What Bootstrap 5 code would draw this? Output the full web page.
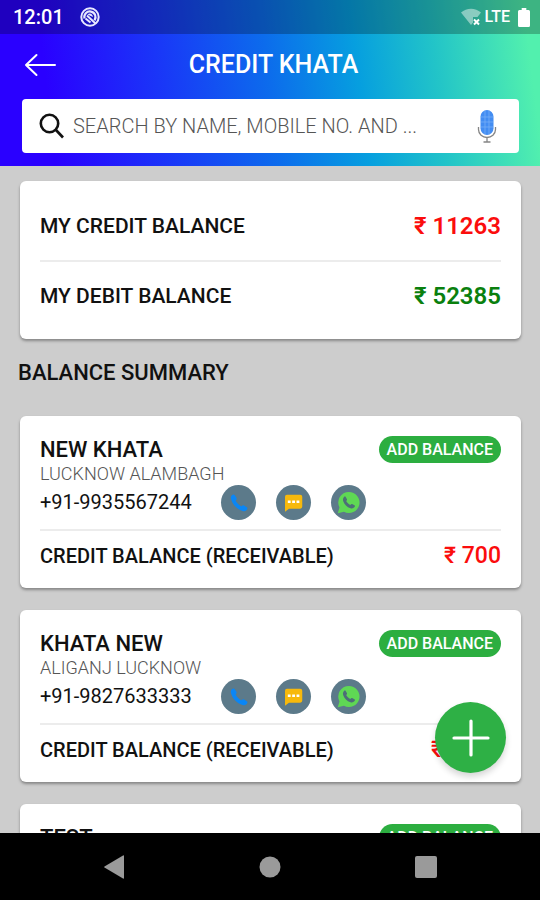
<!DOCTYPE html>
<html lang="en">
<head>
<meta charset="utf-8">
<meta name="viewport" content="width=device-width, initial-scale=1">
<title>Credit Khata</title>
<link rel="stylesheet" href="https://cdn.jsdelivr.net/npm/bootstrap@5.3.0/dist/css/bootstrap.min.css">
<style>
body { font-family: Roboto, "Noto Sans", sans-serif; background: #cdcdcd; color: #111; }
svg { display: block; flex: none; }
.app-head { background: linear-gradient(83deg, #2a00ff 10%, #1a35f8 30%, #0c6cec 50%, #069fdf 66%, #22c4c8 80%, #52f0ae 97%); }
.status-bar { height: 34px; padding: 0 10px 0 13px; background: rgba(0, 0, 0, .25); }
.clock { font-size: 20px; font-weight: 500; line-height: 36px; }
.net { font-size: 16px; font-weight: 500; line-height: 36px; }
.title-bar { height: 61px; padding: 0 17px 0 24px; }
.title-bar h1 { font-size: 25px; line-height: 32px; font-weight: 500; }
.title-side { width: 32px; }
.search-box { height: 54px; margin: 4px 21px 13px 22px; padding: 0 20px 0 17px; border-radius: 4px; }
.search-box input { font-size: 20px; font-weight: 300; color: #555; outline: 0; text-overflow: ellipsis; }
.search-box input::placeholder { color: #555; opacity: 1; }
.content { padding: 15px 19px 0 20px; min-height: 0; }
.panel { border: 0; border-radius: 6px; padding: 0 20px; box-shadow: 0 2px 3px rgba(0, 0, 0, .35); flex: none; }
.totals { padding-top: 11px; padding-bottom: 9px; }
.line { font-size: 21px; line-height: 68px; font-weight: 500; }
.line-short { font-size: 20px; line-height: 50px; }
.amount { font-weight: 600; font-size: 24px; }
.amount-sm { font-weight: 500; font-size: 23px; }
.red { color: #fb0d0d; }
.green { color: #0a800e; }
.rule { height: 2px; background: #ececec; }
.heading { font-size: 22px; line-height: 32px; font-weight: 500; margin: 18px 0 27px -2px; }
.account { padding-top: 20px; padding-bottom: 7px; margin-bottom: 22px; }
.account h3 { font-size: 22px; line-height: 27px; font-weight: 500; }
.place { font-size: 18px; line-height: 22px; color: #555; font-weight: 300; }
.phone { font-size: 20px; line-height: 35px; min-width: 181px; }
.account .rule { margin-top: 9px; }
.btn-add { height: 27px; padding: 0 8px; border-radius: 14px; background: #2cae40; color: #fff; font-size: 16px; line-height: 27px; font-weight: 500; }
.round { width: 35px; height: 35px; background: #5c7a8a; }
.contacts { gap: 20px; }
.fab { position: absolute; right: 34px; bottom: 127px; width: 71px; height: 71px; background: #2eb045; box-shadow: 0 4px 6px rgba(0, 0, 0, .16); }
.sys-nav { height: 67px; background: #000; padding: 0 78px; }
.sys-nav button { width: 72px; height: 60px; }
</style>
<script src="https://cdn.jsdelivr.net/npm/bootstrap@5.3.0/dist/js/bootstrap.bundle.min.js"></script>
</head>
<body class="d-flex flex-column vh-100 overflow-hidden">
<svg width="0" height="0" class="position-absolute" aria-hidden="true">
  <symbol id="i-call" viewBox="0 0 24 24"><path fill="#0a86f5" d="M4.200 3.600c.9-1 2.300-1.200 3-.2l2 3c.6.9.2 1.900-.9 2.900 1.200 2.700 3.400 4.900 6.300 6.200 1-1.100 2-1.400 2.900-.9l3 1.900c1.100.7.9 2-.1 3-1.300 1.300-2.700 1.700-4.500 1.200C9.800 18.900 5 14 3.300 8c-.5-1.800-.3-3.200.9-4.400z"/></symbol>
  <symbol id="i-sms" viewBox="0 0 24 24"><path fill="#f7b90c" d="M4.500 3h15.200A2.300 2.300 0 0 1 22 5.300v11.400a2.300 2.300 0 0 1-2.300 2.300H6.800L2.300 22.500V5.300A2.300 2.300 0 0 1 4.500 3z"/><path fill="#fff" d="M5.500 9.700h3.200v3H5.500zM10.500 9.700h3.200v3h-3.200zM15.500 9.700h3.200v3h-3.200z"/></symbol>
  <symbol id="i-wa" viewBox="0 0 24 24"><path fill="#5fd854" d="M12.300 1a11 11 0 1 1-5 20.700L.8 23.200l1.800-6A11 11 0 0 1 12.300 1z"/><path fill="#4d6f78" d="M7.300 6.300c.5-.6 1.400-.7 1.800-.1l1.300 2.300c.3.600-.1 1.200-.8 2 1 1.900 2.400 3.200 4.300 4.100.7-.9 1.200-1.300 1.900-1l2.400 1.200c.7.400.6 1.300.1 2-1 1.300-2.600 1.700-4.200 1.200-3.700-1.100-6.500-3.800-7.600-7.300-.5-1.700-.3-3.200.8-4.400z"/></symbol>
</svg>

<header class="app-head text-white">
  <div class="status-bar d-flex align-items-center">
    <span class="clock me-3">12:01</span>
    <svg width="20" height="20" viewBox="0 0 20 20" fill="none" stroke="#e8e8ff"><circle cx="10" cy="10" r="8.700" stroke-width="2"/><path d="M4.500 11.500A5.600 5.600 0 1 1 14.500 13.300" stroke-width="2.200"/><path d="M7.500 7.500c2-2 5-1 5.500 2.500z" fill="#e8e8ff" stroke="none"/><path d="M7 8.500l8.500 8M5.500 11.500l5 4" stroke-width="2"/></svg>
    <svg class="ms-auto me-1" width="20" height="18" viewBox="0 0 20 18"><path fill="#fff" fill-opacity=".45" d="M10 17L0 4.500C5.500-.6 14.500-.6 20 4.500L16.500 9H12v5.500z"/><path stroke="#fff" stroke-width="2" d="M13 11.500l5 5m0-5l-5 5"/></svg>
    <span class="net me-2">LTE</span>
    <svg width="12" height="19" viewBox="0 0 13 19" preserveAspectRatio="none"><path fill="#fff" d="M4 0h5v2h2.500A1.500 1.500 0 0 1 13 3.500v14a1.500 1.500 0 0 1-1.500 1.500h-10A1.500 1.500 0 0 1 0 17.500v-14A1.500 1.500 0 0 1 1.500 2H4z"/></svg>
  </div>
  <div class="title-bar d-flex align-items-center">
    <button type="button" class="btn p-0 border-0 title-side" aria-label="Back">
      <svg width="32" height="24" viewBox="0 0 32 24" fill="none" stroke="#fff" stroke-width="2" stroke-linecap="round" stroke-linejoin="round"><path d="M31 12H2M12.500 2L2 12l10.500 10"/></svg>
    </button>
    <h1 class="m-0 flex-fill text-center">CREDIT KHATA</h1>
    <div class="title-side"></div>
  </div>
  <div class="search-box bg-white d-flex align-items-center">
    <svg width="26" height="26" viewBox="0 0 26 26" fill="none" stroke="#111" stroke-width="2.600"><circle cx="10.500" cy="10.500" r="8.700"/><path d="M16.500 16.500l7.500 8"/></svg>
    <input type="text" class="border-0 bg-transparent flex-fill p-0 ms-2" aria-label="Search" placeholder="SEARCH BY NAME, MOBILE NO. AND ...">
    <button type="button" class="btn p-0 border-0" aria-label="Voice search">
      <svg width="24" height="34" viewBox="0 0 24 34"><rect x="5.500" y="1" width="13" height="25" rx="6.500" fill="#438df2"/><path d="M10 2v23M14 2v23M6 8h12M6 13h12M6 18h12" stroke="#75adf7" stroke-width=".8"/><path d="M3.500 18v2.500c0 4.500 4 8 8.500 8s8.500-3.500 8.500-8V18M12 29v4M8.500 33h7" fill="none" stroke="#858585" stroke-width="1.300"/></svg>
    </button>
  </div>
</header>

<main class="content d-flex flex-column flex-fill overflow-hidden">
  <section class="card panel totals">
    <div class="line d-flex justify-content-between"><span>MY CREDIT BALANCE</span><span class="amount red">₹ 11263</span></div>
    <div class="rule"></div>
    <div class="line d-flex justify-content-between"><span>MY DEBIT BALANCE</span><span class="amount green">₹ 52385</span></div>
  </section>

  <h2 class="heading">BALANCE SUMMARY</h2>

  <article class="card panel account">
    <div class="d-flex justify-content-between"><h3 class="m-0">NEW KHATA</h3><button type="button" class="btn border-0 btn-add">ADD BALANCE</button></div>
    <div class="place">LUCKNOW ALAMBAGH</div>
    <div class="d-flex">
      <span class="phone">+91-9935567244</span>
      <div class="d-flex contacts">
        <button type="button" class="btn border-0 p-0 rounded-circle round d-flex align-items-center justify-content-center" aria-label="Call"><svg width="22" height="22"><use href="#i-call"/></svg></button>
        <button type="button" class="btn border-0 p-0 rounded-circle round d-flex align-items-center justify-content-center" aria-label="Message"><svg width="21" height="21"><use href="#i-sms"/></svg></button>
        <button type="button" class="btn border-0 p-0 rounded-circle round d-flex align-items-center justify-content-center" aria-label="WhatsApp"><svg width="23" height="23"><use href="#i-wa"/></svg></button>
      </div>
    </div>
    <div class="rule"></div>
    <div class="line line-short d-flex justify-content-between"><span>CREDIT BALANCE (RECEIVABLE)</span><span class="amount-sm red">₹ 700</span></div>
  </article>

  <article class="card panel account">
    <div class="d-flex justify-content-between"><h3 class="m-0">KHATA NEW</h3><button type="button" class="btn border-0 btn-add">ADD BALANCE</button></div>
    <div class="place">ALIGANJ LUCKNOW</div>
    <div class="d-flex">
      <span class="phone">+91-9827633333</span>
      <div class="d-flex contacts">
        <button type="button" class="btn border-0 p-0 rounded-circle round d-flex align-items-center justify-content-center" aria-label="Call"><svg width="22" height="22"><use href="#i-call"/></svg></button>
        <button type="button" class="btn border-0 p-0 rounded-circle round d-flex align-items-center justify-content-center" aria-label="Message"><svg width="21" height="21"><use href="#i-sms"/></svg></button>
        <button type="button" class="btn border-0 p-0 rounded-circle round d-flex align-items-center justify-content-center" aria-label="WhatsApp"><svg width="23" height="23"><use href="#i-wa"/></svg></button>
      </div>
    </div>
    <div class="rule"></div>
    <div class="line line-short d-flex justify-content-between"><span>CREDIT BALANCE (RECEIVABLE)</span><span class="amount-sm red">₹ 1000</span></div>
  </article>

  <article class="card panel account">
    <div class="d-flex justify-content-between"><h3 class="m-0">TEST</h3><button type="button" class="btn border-0 btn-add">ADD BALANCE</button></div>
  </article>
</main>

<footer class="position-relative">
  <nav class="sys-nav d-flex align-items-center justify-content-between" aria-label="System">
    <button type="button" class="btn border-0 p-0 d-flex align-items-center justify-content-center" aria-label="Back"><svg width="20" height="24" viewBox="0 0 20 24"><path fill="#9a9a9a" d="M19 .5Q20 0 20 1v22q0 1-1 .5L.5 12.500q-.7-.5 0-1z"/></svg></button>
    <button type="button" class="btn border-0 p-0 d-flex align-items-center justify-content-center" aria-label="Home"><svg width="22" height="22"><circle cx="11" cy="11" r="10.500" fill="#9a9a9a"/></svg></button>
    <button type="button" class="btn border-0 p-0 d-flex align-items-center justify-content-center" aria-label="Recents"><svg width="22" height="22"><rect width="22" height="22" rx="2" fill="#9a9a9a"/></svg></button>
  </nav>
  <button type="button" class="btn border-0 p-0 rounded-circle fab d-flex align-items-center justify-content-center" aria-label="Add account">
    <svg width="38" height="38" viewBox="0 0 38 38" stroke="#fff" stroke-width="3.200" stroke-linecap="round"><path d="M19 2v34M2 19h34"/></svg>
  </button>
</footer>
</body>
</html>
